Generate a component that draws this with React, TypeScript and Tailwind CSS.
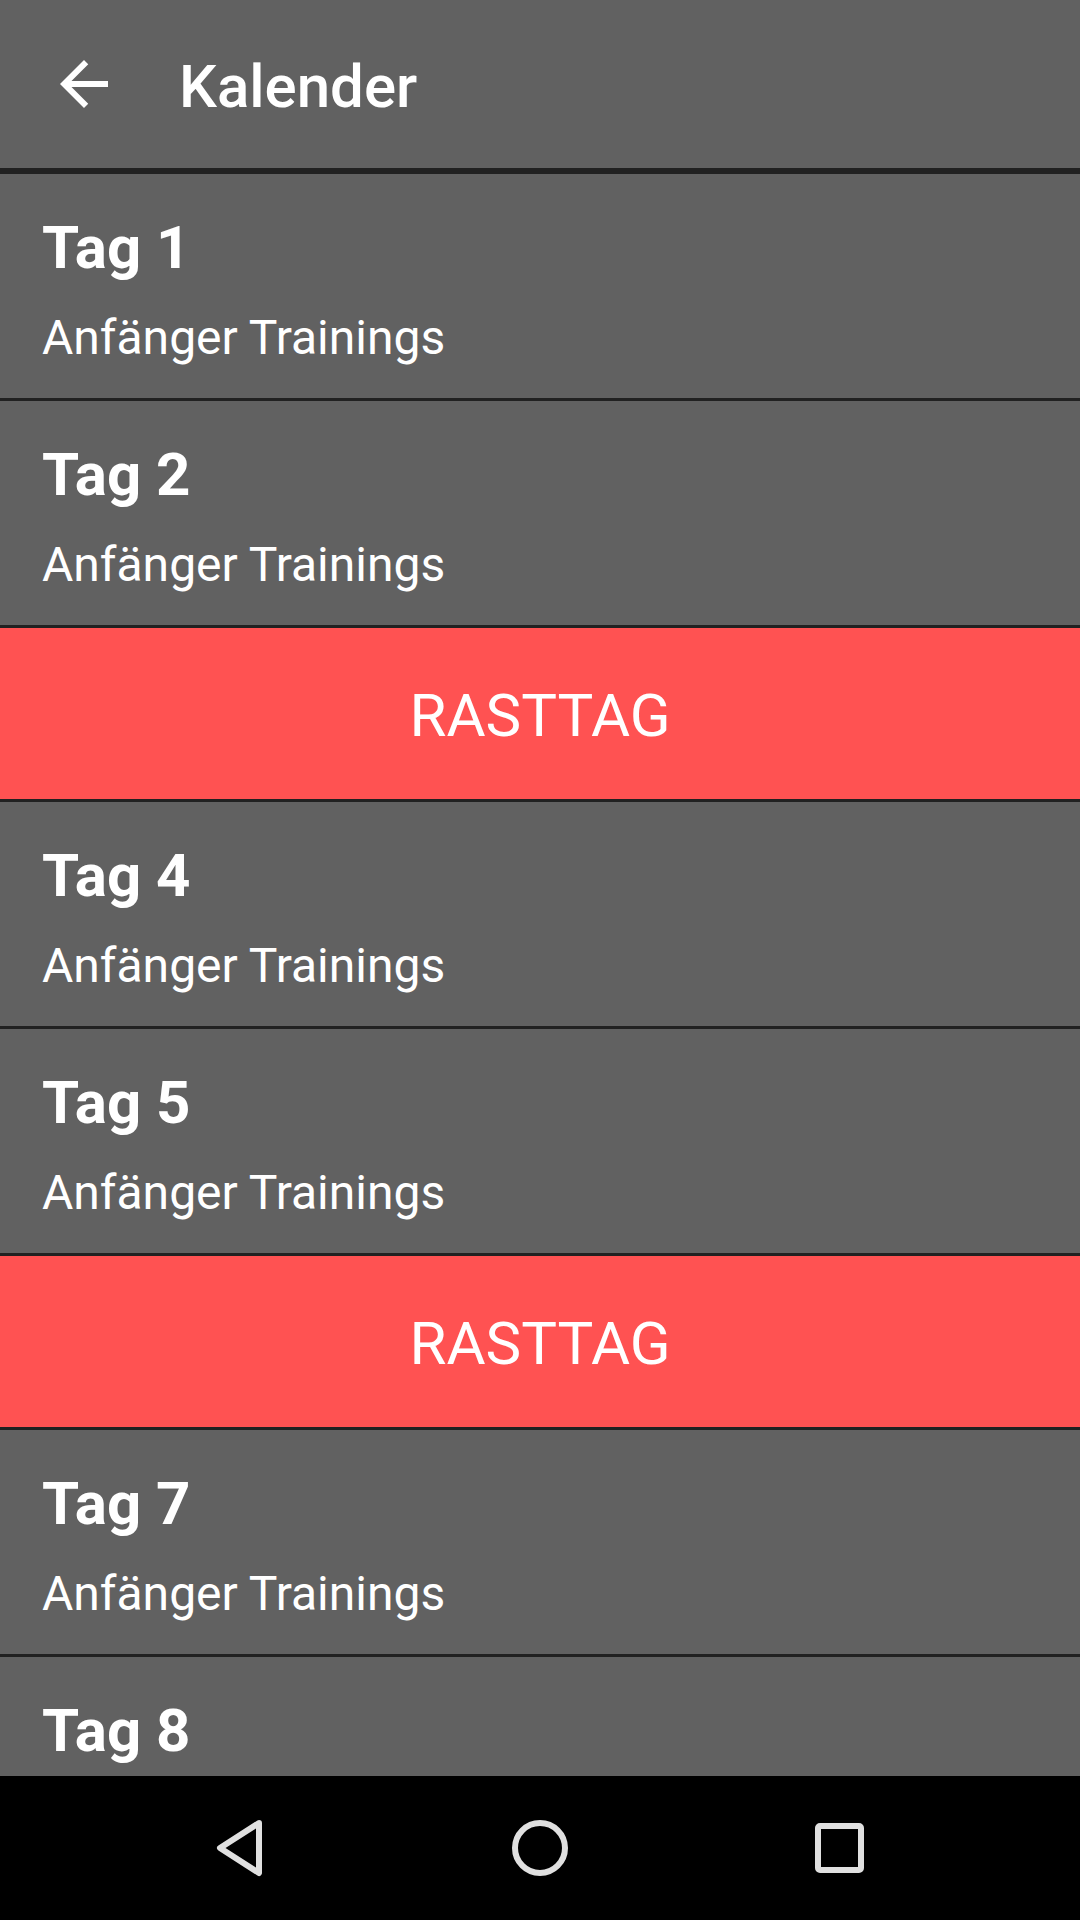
import React from 'react';

type Entry = { kind: 'day'; title: string; subtitle: string } | { kind: 'rest' };

const entries: Entry[] = [
  { kind: 'day', title: 'Tag 1', subtitle: 'Anfänger Trainings' },
  { kind: 'day', title: 'Tag 2', subtitle: 'Anfänger Trainings' },
  { kind: 'rest' },
  { kind: 'day', title: 'Tag 4', subtitle: 'Anfänger Trainings' },
  { kind: 'day', title: 'Tag 5', subtitle: 'Anfänger Trainings' },
  { kind: 'rest' },
  { kind: 'day', title: 'Tag 7', subtitle: 'Anfänger Trainings' },
  { kind: 'day', title: 'Tag 8', subtitle: 'Anfänger Trainings' },
];

function DayRow({ title, subtitle }: { title: string; subtitle: string }) {
  return (
    <div className="bg-[#616161] h-[224px] shrink-0 pl-[42px] pt-[44px] text-white">
      <div className="text-[60px] leading-[60px] font-bold">{title}</div>
      <div className="mt-[36px] text-[48px] leading-[48px] font-normal">{subtitle}</div>
    </div>
  );
}

function RestRow() {
  return (
    <div className="bg-[#ff5252] h-[171px] shrink-0 pt-[58px] text-center text-white text-[60px] leading-[60px] font-normal">
      RASTTAG
    </div>
  );
}

export default function App() {
  return (
    <div className="h-[1920px] w-[1080px] flex flex-col bg-[#616161] font-['Roboto',sans-serif] overflow-hidden">
      {/* Toolbar */}
      <header className="h-[168px] shrink-0 flex items-center pl-[48px] bg-[#616161] border-b-[6px] border-[#212121] box-content">
        <svg width="72" height="72" viewBox="0 0 24 24" fill="#ffffff">
          <path d="M20 11H7.83l5.59-5.59L12 4l-8 8 8 8 1.41-1.41L7.83 13H20v-2z" />
        </svg>
        <span className="ml-[59px] pt-[5px] text-white text-[60px] leading-[60px] font-medium">Kalender</span>
      </header>

      {/* List */}
      <div className="flex-1 flex flex-col gap-[3px] bg-[#212121] overflow-hidden">
        {entries.map((e, i) =>
          e.kind === 'day' ? <DayRow key={i} title={e.title} subtitle={e.subtitle} /> : <RestRow key={i} />
        )}
      </div>

      {/* Navigation bar */}
      <nav className="h-[144px] shrink-0 bg-black flex items-center justify-center">
        <div className="w-[300px] flex justify-center">
          <svg width="96" height="96" viewBox="0 0 96 96" fill="none" stroke="#e0e0e0" strokeWidth="6" strokeLinejoin="round">
            <path d="M67 23 L28 48 L67 73 Z" />
          </svg>
        </div>
        <div className="w-[300px] flex justify-center">
          <svg width="96" height="96" viewBox="0 0 96 96" fill="none" stroke="#e0e0e0" strokeWidth="6">
            <circle cx="48" cy="48" r="25" />
          </svg>
        </div>
        <div className="w-[300px] flex justify-center">
          <svg width="96" height="96" viewBox="0 0 96 96" fill="none" stroke="#e0e0e0" strokeWidth="6">
            <rect x="26" y="26" width="43" height="44" rx="2" />
          </svg>
        </div>
      </nav>
    </div>
  );
}
